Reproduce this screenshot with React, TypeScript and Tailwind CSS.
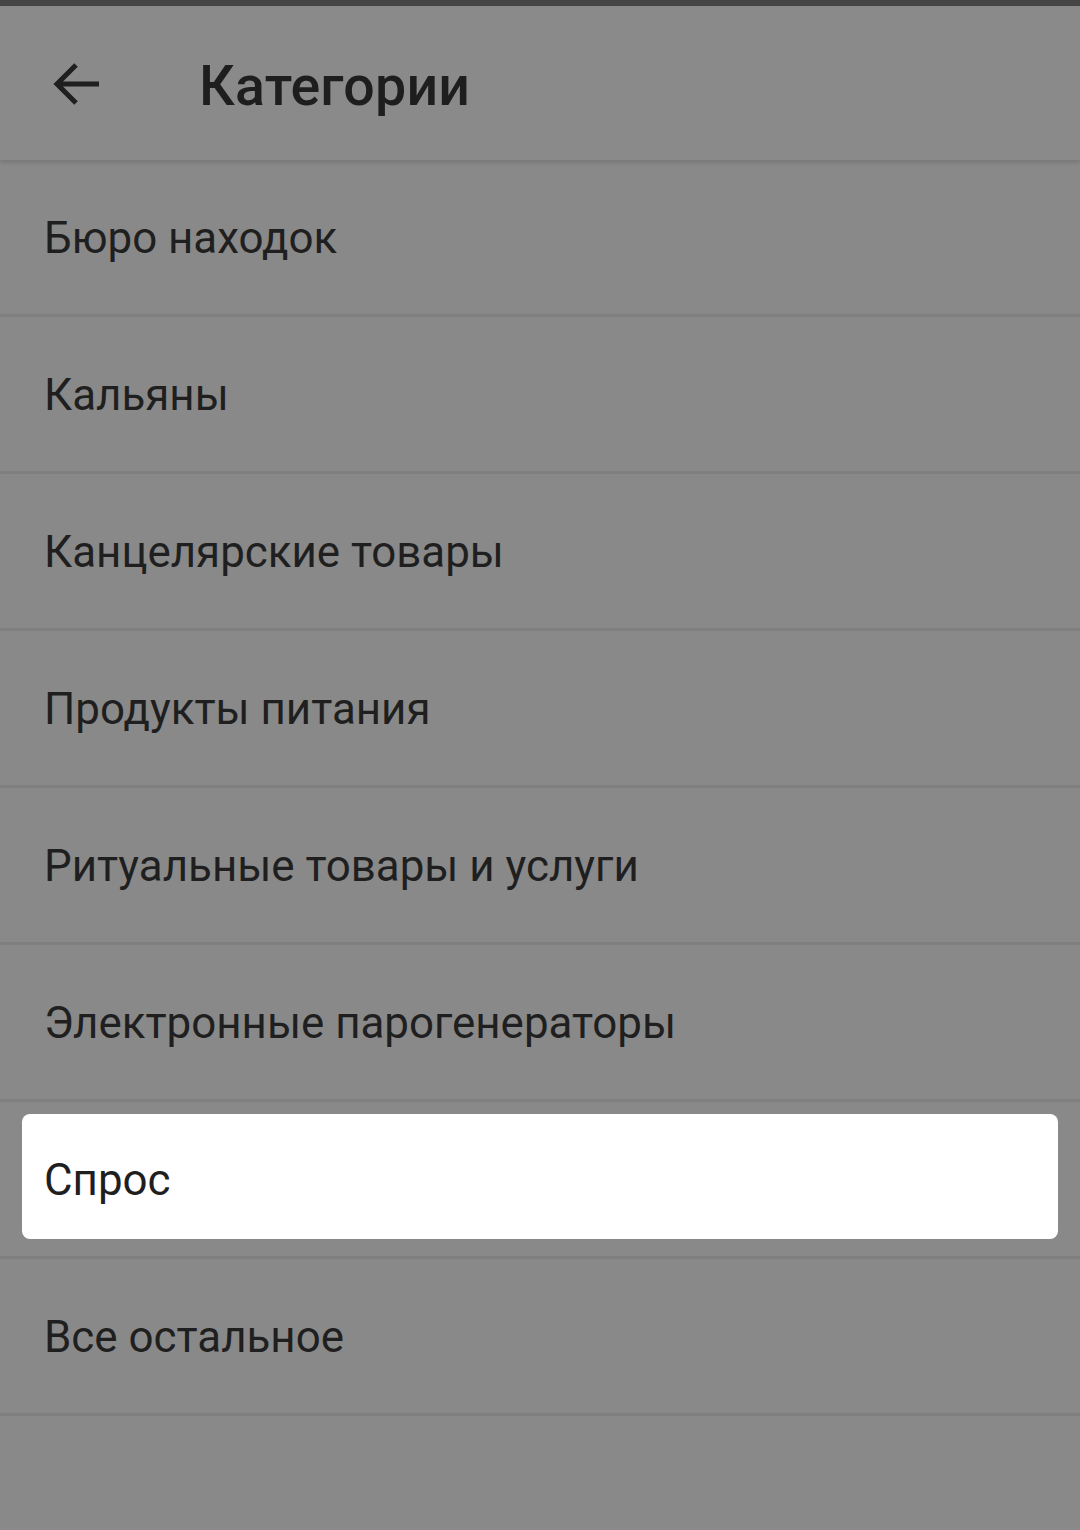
import React from 'react';

const items = [
  'Бюро находок',
  'Кальяны',
  'Канцелярские товары',
  'Продукты питания',
  'Ритуальные товары и услуги',
  'Электронные парогенераторы',
  'Спрос',
  'Все остальное',
];

const selected = 'Спрос';

export default function App() {
  return (
    <div
      className="w-[1080px] h-[1530px] bg-[#898989] overflow-hidden"
      style={{ fontFamily: 'Roboto, "Noto Sans", sans-serif' }}
    >
      {/* status strip */}
      <div className="h-[6px] bg-[#454545]" />

      {/* Header */}
      <div className="h-[154px] flex items-center bg-[#8a8a8a] shadow-[0_3px_4px_rgba(0,0,0,0.12)] relative z-10">
        <div className="w-[199px] pl-[52px] pt-[2px] flex items-center">
          <svg width="50" height="46" viewBox="0 0 50 46" fill="none">
            <path
              d="M47 23H6M24 4L5 23L24 42"
              stroke="#1f1f1f"
              strokeWidth="5"
              strokeLinecap="butt"
              strokeLinejoin="miter"
            />
          </svg>
        </div>
        <h1 className="text-[55.5px] font-medium text-[#1e1e1e] tracking-[0.2px] leading-none pt-[8px]">
          Категории
        </h1>
      </div>

      {/* List */}
      <div>
        {items.map((item) =>
          item === selected ? (
            <div key={item} className="h-[157px] border-b-[3px] border-[#7f7f7f] px-[22px] pt-[12px] pb-[17px]">
              <div className="h-full bg-white rounded-[8px] flex items-center pl-[22px] pt-[8px]">
                <span className="text-[43.9px] text-[#1f1f1f]">{item}</span>
              </div>
            </div>
          ) : (
            <div key={item} className="h-[157px] border-b-[3px] border-[#7f7f7f] flex items-center pl-[44px] pt-[3px]">
              <span className="text-[43.9px] text-[#1f1f1f]">{item}</span>
            </div>
          )
        )}
      </div>
    </div>
  );
}
